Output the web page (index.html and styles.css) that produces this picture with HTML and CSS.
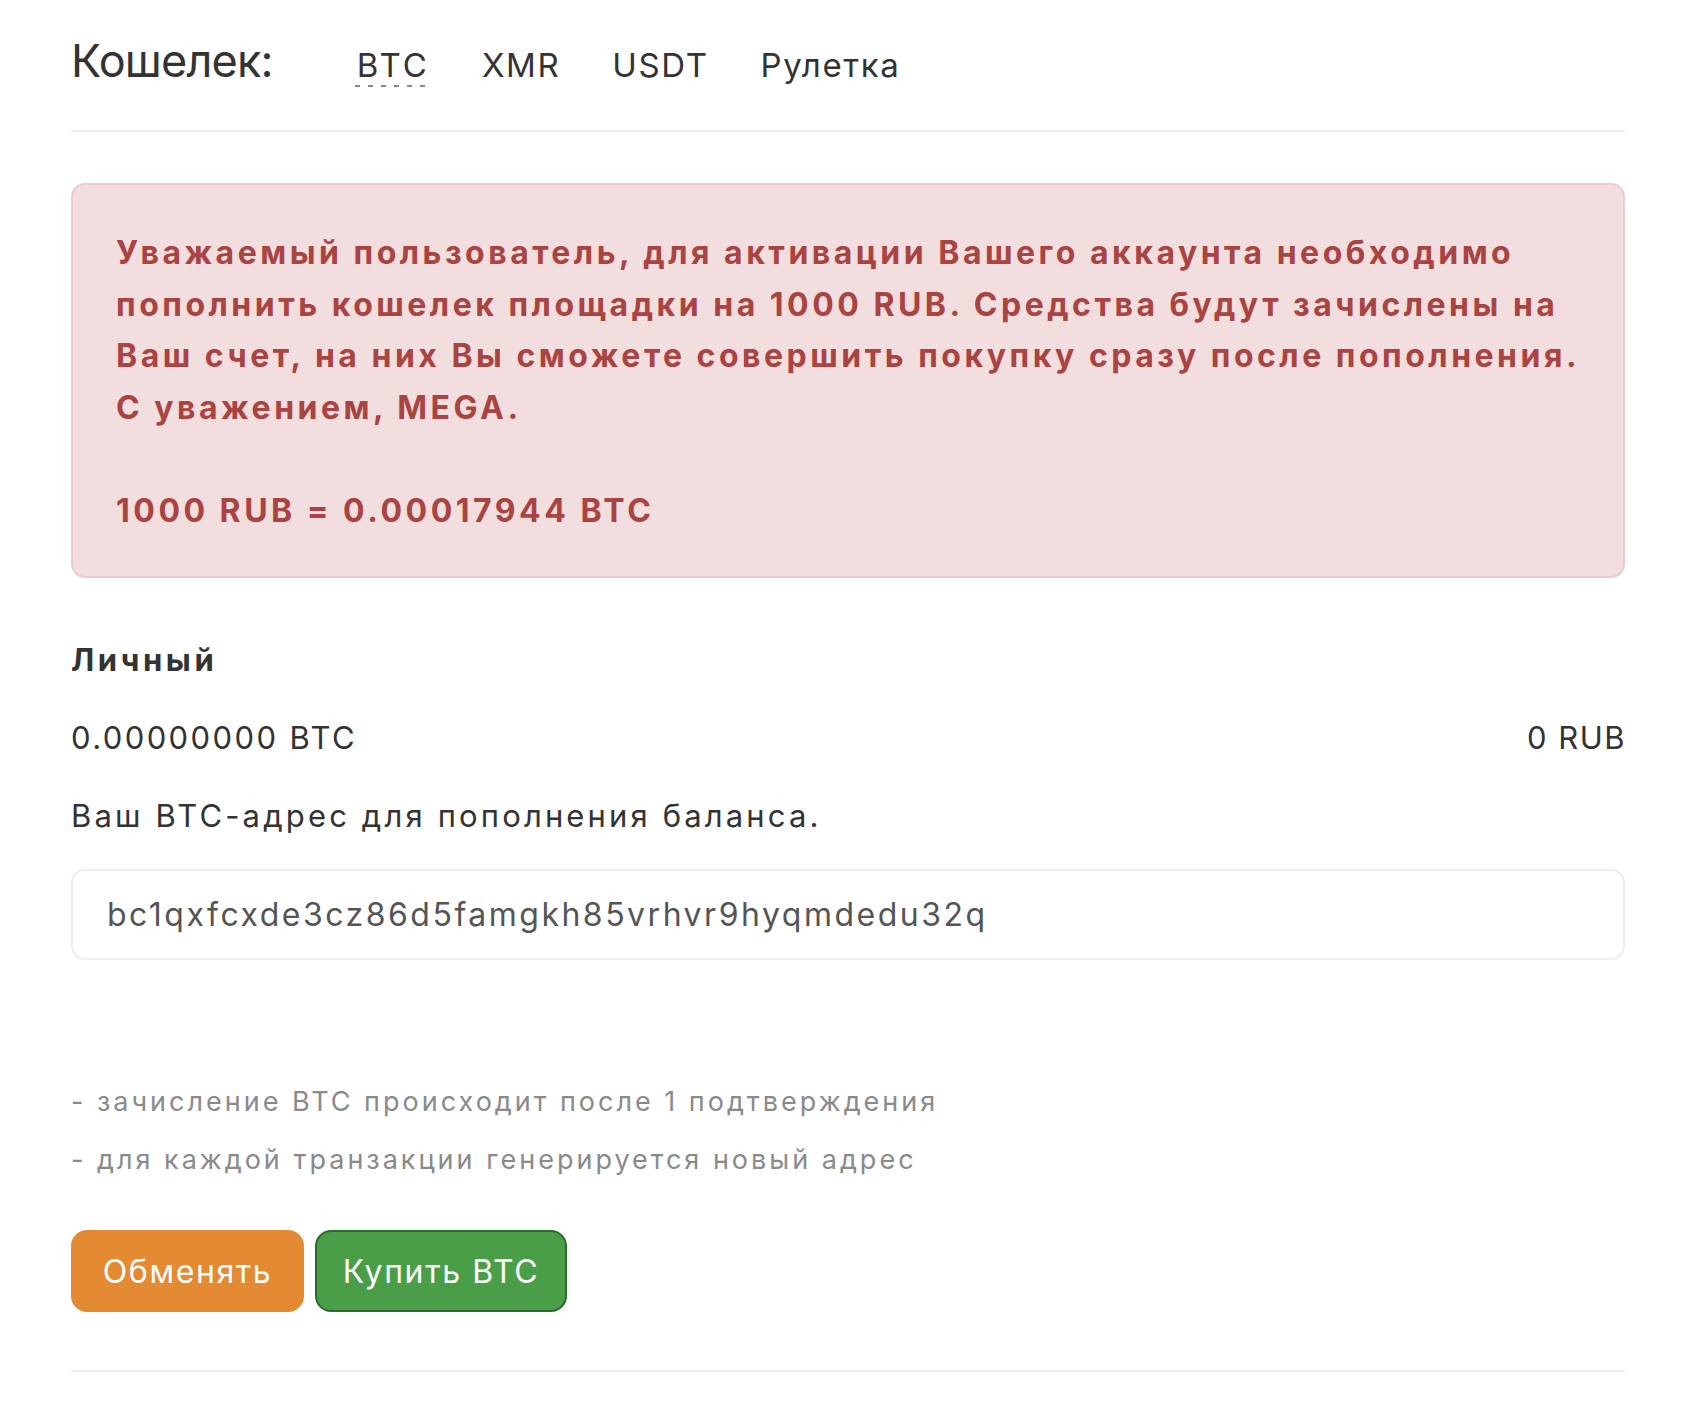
FILE: index.html
```html
<!DOCTYPE html>
<html lang="ru">
<head>
    <meta charset="UTF-8">
    <meta name="viewport" content="width=device-width, initial-scale=1.0">
    <title>Кошелек</title>
    <link rel="stylesheet" href="styles.css">
</head>
<body>
    <div class="wallet">
        <div class="wallet-head">
            <h2 class="wallet-title">Кошелек:</h2>
            <nav class="wallet-tabs">
                <a href="#" class="tab active">BTC</a>
                <a href="#" class="tab">XMR</a>
                <a href="#" class="tab">USDT</a>
                <a href="#" class="tab">Рулетка</a>
            </nav>
        </div>

        <div class="alert-danger">
            Уважаемый пользователь, для активации Вашего аккаунта необходимо<br>
            пополнить кошелек площадки на 1000 RUB. Средства будут зачислены на<br>
            Ваш счет, на них Вы сможете совершить покупку сразу после пополнения.<br>
            С уважением, MEGA.<br><br>
            1000 RUB = 0.00017944 BTC
        </div>

        <h4 class="acc-title">Личный</h4>
        <div class="balance">
            <span>0.00000000 BTC</span>
            <span>0 RUB</span>
        </div>
        <p class="addr-label">Ваш BTC-адрес для пополнения баланса.</p>
        <input type="text" class="addr-input" value="bc1qxfcxde3cz86d5famgkh85vrhvr9hyqmdedu32q" readonly>

        <div class="notes">
            <p>- зачисление BTC происходит после 1 подтверждения</p>
            <p>- для каждой транзакции генерируется новый адрес</p>
        </div>

        <div class="actions">
            <a href="#" class="btn btn-orange">Обменять</a>
            <a href="#" class="btn btn-green">Купить BTC</a>
        </div>
        <div class="bottom-line"></div>
    </div>
</body>
</html>
```

FILE: styles.css
```css
body {
    font-family: Inter, "Noto Sans", sans-serif;
    margin: 0;
    padding: 0;
    background-color: #fff;
    color: #333;
}

.wallet {
    padding: 0 63px 0 71px;
}

.wallet-head {
    display: flex;
    align-items: center;
    height: 130px;
    border-bottom: 2px solid #eee;
}

.wallet-title {
    margin: 0;
    font-size: 45px;
    font-weight: 400;
    letter-spacing: -0.8px;
    color: #333;
    margin-right: 84px;
    padding-bottom: 10px;
}

.wallet-tabs {
    display: flex;
    gap: 52px;
}

.tab {
    font-size: 33px;
    letter-spacing: 1.6px;
    color: #333;
    text-decoration: none;
}

.tab.active {
    position: relative;
    letter-spacing: 3px;
}

.tab.active::after {
    content: "";
    position: absolute;
    left: -2px;
    right: 2px;
    bottom: -2px;
    height: 2px;
    background-image: repeating-linear-gradient(to right, #888 0 5px, transparent 5px 13px);
}

.alert-danger {
    margin-top: 51px;
    background-color: #f2dede;
    border: 2px solid #ebccd1;
    border-radius: 14px;
    color: #a94442;
    font-weight: 700;
    font-size: 32px;
    letter-spacing: 3.5px;
    line-height: 51.5px;
    white-space: nowrap;
    padding: 42px 20px 40px 43px;
}

.acc-title {
    margin: 0;
    margin-top: 60px;
    font-size: 31px;
    font-weight: 700;
    letter-spacing: 3.6px;
    line-height: 44px;
    color: #333;
}

.balance {
    display: flex;
    justify-content: space-between;
    margin-top: 34px;
    font-size: 31px;
    line-height: 44px;
    letter-spacing: 2.4px;
}

.balance span:last-child {
    letter-spacing: 1.5px;
    margin-right: -1px;
}

.addr-label {
    margin: 34px 0 0;
    font-size: 31px;
    line-height: 44px;
    letter-spacing: 3.15px;
}

.addr-input {
    display: block;
    box-sizing: border-box;
    width: 100%;
    height: 91px;
    margin-top: 31px;
    padding: 0 34px;
    border: 2px solid #eee;
    border-radius: 14px;
    font-family: Inter, "Noto Sans", sans-serif;
    font-size: 32px;
    letter-spacing: 2.5px;
    color: #555;
    outline: none;
}

.notes {
    margin-top: 120px;
}

.notes p {
    margin: 0 0 14px;
    font-size: 27px;
    line-height: 44px;
    letter-spacing: 3px;
    color: #8a8a8a;
}

.actions {
    display: flex;
    gap: 11px;
    margin-top: 48px;
}

.btn {
    display: flex;
    align-items: center;
    justify-content: center;
    box-sizing: border-box;
    height: 82px;
    border-radius: 16px;
    font-size: 32px;
    letter-spacing: 1.6px;
    color: #fff;
    text-decoration: none;
}

.btn-orange {
    width: 233px;
    background-color: #e38a33;
    border: 2px solid #e38a33;
}

.btn-green {
    width: 252px;
    background-color: #499e47;
    border: 2px solid #2b6a2b;
}

.bottom-line {
    margin-top: 58px;
    border-top: 2px solid #eee;
}
```
